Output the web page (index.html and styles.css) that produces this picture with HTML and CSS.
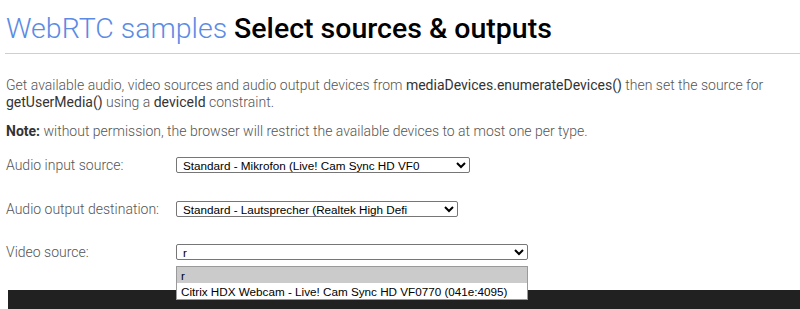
FILE: index.html
```html
<!DOCTYPE html>
<html>
<head>
<meta charset="utf-8">
<link rel="stylesheet" href="styles.css">
</head>
<body>
<div class="page">
  <h1 class="title"><span class="brand">WebRTC samples</span> <span class="sub">Select sources &amp; outputs</span></h1>
  <hr class="rule">
  <p class="intro">Get available audio, video sources and audio output devices from <span class="code">mediaDevices.enumerateDevices()</span> then set the source for <span class="code">getUserMedia()</span> using a <span class="code">deviceId</span> constraint.</p>
  <p class="note"><strong>Note:</strong> without permission, the browser will restrict the available devices to at most one per type.</p>
  <div class="row row-first">
    <label class="lbl">Audio input source:</label>
    <select class="sel sel-in"><option>Standard - Mikrofon (Live! Cam Sync HD VF0</option></select>
  </div>
  <div class="row">
    <label class="lbl">Audio output destination:</label>
    <select class="sel sel-out"><option>Standard - Lautsprecher (Realtek High Defi</option></select>
  </div>
  <div class="row row-last">
    <label class="lbl">Video source:</label>
    <div class="selwrap">
      <select class="sel sel-vid"><option>r</option></select>
      <div class="popup">
        <div class="opt opt-active">r</div>
        <div class="opt">Citrix HDX Webcam - Live! Cam Sync HD VF0770 (041e:4095)</div>
      </div>
    </div>
  </div>
</div>
<div class="footer"></div>
</body>
</html>
```
FILE: styles.css
```css
html, body {
  margin: 0;
  padding: 0;
  background: #fff;
  overflow: hidden;
}
body {
  font-family: Roboto, "Liberation Sans", sans-serif;
  font-weight: 300;
  color: #555;
  height: 309px;
  position: relative;
}
.page {
  padding: 12px 0 0 6px;
}
.title {
  margin: 0;
  font-size: 28.5px;
  line-height: 34px;
  font-weight: 300;
  white-space: nowrap;
}
.brand {
  color: #5b8be4;
}
.sub {
  color: #000;
  font-weight: 500;
}
.rule {
  border: 0;
  border-top: 1px solid #cfcfcf;
  margin: 7px 0 0 -1px;
  height: 0;
}
.intro {
  margin: 23px 0 0 0;
  font-size: 14px;
  line-height: 17px;
  padding-right: 20px;
}
.code {
  color: #333;
  font-weight: 400;
}
.note {
  margin: 12px 0 0 0;
  font-size: 14px;
  line-height: 17px;
}
.note strong {
  font-weight: 700;
  color: #333;
}
.row {
  display: flex;
  align-items: center;
  height: 16px;
  margin-top: 28px;
}
.row-first {
  margin-top: 17px;
}
.row-last {
  margin-top: 27px;
}
.lbl {
  width: 170px;
  font-size: 14px;
  color: #555;
}
.sel {
  height: 16px;
  font-family: "Liberation Sans", Arial, sans-serif;
  font-size: 11.7px;
  color: #000;
  border: 1px solid #767676;
  border-radius: 2px;
  background: #fff;
  padding: 0 0 0 2px;
  box-sizing: border-box;
}
.sel-in { width: 294px; }
.sel-out { width: 282px; }
.sel-vid { width: 352px; display: block; }
.selwrap {
  position: relative;
}
.popup {
  position: absolute;
  left: 0;
  top: 22px;
  width: 352px;
  box-sizing: border-box;
  border: 1px solid #9a9a9a;
  background: #fff;
  z-index: 2;
  font-family: "Liberation Sans", Arial, sans-serif;
  font-size: 11.7px;
  color: #000;
}
.opt {
  height: 16px;
  line-height: 17px;
  padding-left: 4px;
}
.opt-active {
  background: #cbcbcb;
}
.footer {
  position: absolute;
  left: 8px;
  right: 0;
  top: 290px;
  height: 19px;
  background: #212121;
}
```
